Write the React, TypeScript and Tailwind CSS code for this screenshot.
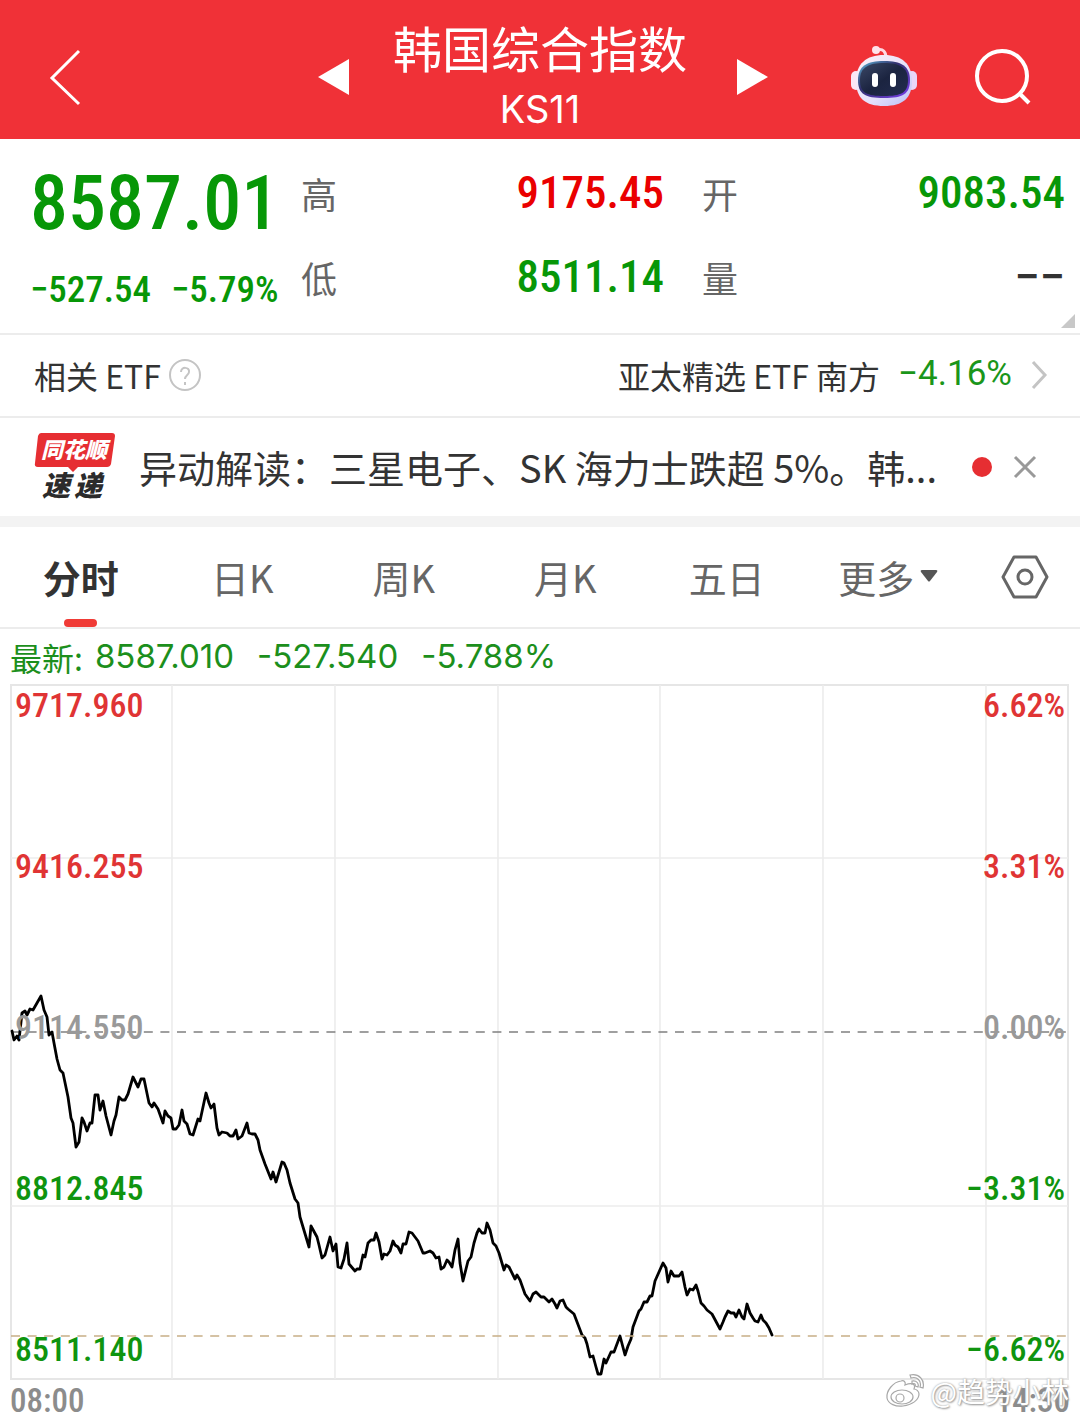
import React from 'react';

const POINTS =
  '12,347 14,356 17,352 19,356 22,329 25,327 27,331 30,325 33,326 41,312 44,326 47,333 49,351 52,348 54,359 57,375 60,386 63,389 68,413 71,434 73,439 76,463 79,458 82,434 84,438 87,447 90,439 92,439 95,411 98,411 100,426 103,417 106,432 111,451 114,437 116,431 119,413 122,416 125,416 128,410 133,393 138,403 141,395 144,395 149,419 152,423 154,419 158,425 163,439 165,427 168,432 171,434 173,445 176,445 179,441 182,426 184,437 187,440 190,450 193,451 198,435 200,437 206,409 209,419 211,424 214,420 217,444 219,451 222,448 227,449 230,452 233,452 236,446 238,455 242,452 247,439 249,449 252,450 255,450 258,456 260,466 265,480 271,495 273,488 276,498 282,478 284,479 287,486 290,499 295,515 298,519 300,533 303,543 309,563 311,542 317,553 319,561 322,574 325,571 330,553 333,567 336,560 338,583 341,584 344,575 347,559 349,580 355,587 357,585 360,585 363,571 365,573 368,559 371,556 374,556 376,549 379,558 382,575 384,570 387,571 390,567 393,557 395,561 398,563 401,569 403,560 406,560 409,548 412,549 418,557 423,569 425,569 430,567 433,569 436,574 439,573 441,585 444,583 447,576 449,578 452,583 455,566 458,555 460,579 463,597 468,577 471,573 474,559 477,549 479,545 482,549 485,549 487,539 490,546 493,559 496,562 499,569 504,586 506,581 509,583 515,595 517,591 520,596 525,610 530,617 533,610 536,608 541,613 544,613 549,618 552,615 555,620 557,624 560,617 563,616 566,623 568,625 574,630 582,651 585,654 587,660 590,673 593,672 596,683 598,690 601,690 604,675 606,679 611,668 614,668 620,652 625,671 628,662 631,655 633,643 639,627 641,625 644,618 647,618 650,612 652,612 655,597 663,579 666,584 668,598 671,587 674,592 679,592 682,588 685,603 687,611 690,605 693,606 696,601 698,607 701,619 704,622 707,626 712,630 720,645 723,638 725,633 728,627 731,629 734,629 736,633 739,626 742,633 744,635 747,620 750,629 753,634 755,637 758,638 761,631 763,636 766,639 769,644 772,651';

const GRID_X = [172, 335, 498, 660, 823, 986];
const GRID_Y = [174, 522];

const AXIS = [
  { price: '9717.960', percent: '6.62%', color: 'text-[#e03434]' },
  { price: '9416.255', percent: '3.31%', color: 'text-[#e03434]' },
  { price: '9114.550', percent: '0.00%', color: 'text-[#999999]' },
  { price: '8812.845', percent: '−3.31%', color: 'text-[#0f940f]' },
  { price: '8511.140', percent: '−6.62%', color: 'text-[#0f940f]' },
];

const STATS = [
  { label: '高', value: '9175.45', color: "font-['Roboto_Condensed','Roboto',sans-serif] text-[#ea0000]" },
  { label: '开', value: '9083.54', color: "font-['Roboto_Condensed','Roboto',sans-serif] text-[#079707]" },
  { label: '低', value: '8511.14', color: "font-['Roboto_Condensed','Roboto',sans-serif] text-[#079707]" },
  { label: '量', value: '−−', color: "font-['Roboto',sans-serif] text-[#333333]" },
];

const TABS = ['分时', '日K', '周K', '月K', '五日'];

const RobotIcon = () => (
  <svg width="68" height="64" viewBox="0 0 68 64" aria-hidden="true">
    <defs>
      <linearGradient id="shell" x1="0" y1="0" x2="1" y2="1">
        <stop offset="0" stopColor="#fff1f6" />
        <stop offset="0.6" stopColor="#e4e0fb" />
        <stop offset="1" stopColor="#b9bdf5" />
      </linearGradient>
      <linearGradient id="rim" x1="0" y1="0" x2="1" y2="1">
        <stop offset="0" stopColor="#5fb8d8" />
        <stop offset="0.4" stopColor="#31306e" />
        <stop offset="1" stopColor="#7b3df0" />
      </linearGradient>
      <linearGradient id="visor" x1="0" y1="0" x2="1" y2="1">
        <stop offset="0" stopColor="#3b4766" />
        <stop offset="0.5" stopColor="#1b2440" />
        <stop offset="1" stopColor="#222c50" />
      </linearGradient>
    </defs>
    <path d="M27 5c6-2 9 2 9 8" fill="none" stroke="#ffd9e2" strokeWidth="3" />
    <circle cx="26" cy="5" r="4" fill="#ffe3ea" />
    <rect x="1" y="26" width="10" height="19" rx="5" fill="#fbe6f4" />
    <rect x="57" y="26" width="10" height="19" rx="5" fill="#e9d6f8" />
    <path d="M34 10c18 0 28 9 28 26 0 17-9 25-28 25S6 53 6 36c0-17 10-26 28-26Z" fill="url(#shell)" />
    <path d="M34 16c17 0 26 5 26 19s-7 18-26 18S8 49 8 35s9-19 26-19Z" fill="url(#rim)" />
    <path d="M34 18c15 0 24 4 24 17s-7 16-24 16-24-3-24-16 9-17 24-17Z" fill="url(#visor)" />
    <rect x="22" y="28" width="6" height="14" rx="3" fill="#fff" />
    <rect x="40" y="28" width="6" height="14" rx="3" fill="#fff" />
  </svg>
);

const BrandLogo = () => (
  <svg width="82" height="72" viewBox="0 0 82 72" role="img" aria-label="同花顺速递" className="shrink-0 overflow-visible">
    <path d="M7 2h71q3 0 3 3l-4 28q-1 3-4 3H44l-5 5-5-5H4q-4 0-3-4L4 5q1-3 3-3Z" fill="#e62e32" />
    <text x="7" y="27" fontSize="22" fontWeight="900" fontStyle="italic" fill="#fff">
      同花顺
    </text>
    <text x="8" y="65" fontSize="28" fontWeight="900" fontStyle="italic" fill="#2b2b2b">
      速
    </text>
    <text x="40" y="65" fontSize="28" fontWeight="900" fontStyle="italic" fill="#2b2b2b">
      递
    </text>
  </svg>
);

const Header = () => (
  <header className="grid grid-cols-[1fr_456px_1fr] items-center bg-[#f03137] h-[139px] pt-[14px] text-white">
    <div className="pl-[48px]">
      <button aria-label="返回" className="block">
        <svg width="34" height="58" viewBox="0 0 34 58" fill="none" stroke="currentColor" strokeWidth="3">
          <path d="M31 3 4 30l27 26" />
        </svg>
      </button>
    </div>
    <div className="flex items-center justify-between">
      <button aria-label="上一个">
        <svg width="38" height="38" viewBox="0 0 38 38" fill="currentColor">
          <path d="M6 19 37 1v36Z" />
        </svg>
      </button>
      <div className="flex flex-col items-center">
        <h1 className="text-[49px] leading-[64px]">韩国综合指数</h1>
        <p className="font-['Inter',sans-serif] text-[38px] leading-[60px]">KS11</p>
      </div>
      <button aria-label="下一个">
        <svg width="38" height="38" viewBox="0 0 38 38" fill="currentColor">
          <path d="M38 19 7 1v36Z" />
        </svg>
      </button>
    </div>
    <div className="flex items-center justify-end gap-[56px] pr-[48px]">
      <button aria-label="智能助手">
        <RobotIcon />
      </button>
      <button aria-label="搜索">
        <svg width="58" height="58" viewBox="0 0 58 58" fill="none" stroke="currentColor" strokeWidth="4">
          <circle cx="28" cy="28" r="25" />
          <path d="m45 45 10 10" />
        </svg>
      </button>
    </div>
  </header>
);

const Quote = () => (
  <section className="relative grid grid-cols-[271px_1fr] pl-[30px] pr-[15px] h-[196px] border-b-2 border-[#ececec]">
    <div className="flex flex-col pt-[24px] font-['Roboto_Condensed','Roboto',sans-serif] font-medium text-[#079707]">
      <span className="text-[76px] leading-[80px]">8587.01</span>
      <div className="flex gap-5 pt-[26px] text-[37px] leading-[42px] whitespace-nowrap">
        <span>−527.54</span>
        <span>−5.79%</span>
      </div>
    </div>
    <dl className="grid grid-cols-2 gap-x-[38px] auto-rows-[84px] pt-[12px]">
      {STATS.map((s) => (
        <div key={s.label} className="flex items-center justify-between">
          <dt className="text-[36px] text-[#666666]">{s.label}</dt>
          <dd className={`font-medium text-[45px] ${s.color}`}>{s.value}</dd>
        </div>
      ))}
    </dl>
    <svg width="14" height="14" viewBox="0 0 14 14" className="absolute right-[5px] bottom-[5px]" aria-hidden="true">
      <path d="M14 0v14H0Z" fill="#c8c8c8" />
    </svg>
  </section>
);

const EtfRow = () => (
  <section className="flex items-center justify-between h-[83px] pl-[34px] pr-[32px] pb-[2px] border-b-2 border-[#ececec] text-[32px] text-[#333333]">
    <div className="flex items-center gap-2">
      <span>相关 ETF</span>
      <button aria-label="说明">
        <svg width="32" height="32" viewBox="0 0 32 32" fill="none" stroke="#c4c4c4" strokeWidth="2">
          <circle cx="16" cy="16" r="15" />
          <path d="M12 13c0-6 9-5 8 0 0 3-4 3-4 7" />
          <path d="M16 23v3" />
        </svg>
      </button>
    </div>
    <a href="#etf" className="flex items-center">
      <span>亚太精选 ETF 南方</span>
      <span className="px-[18px] font-['Roboto',sans-serif] text-[35px] text-[#1a961a]">−4.16%</span>
      <svg width="18" height="30" viewBox="0 0 18 30" fill="none" stroke="#c4c4c4" strokeWidth="3">
        <path d="m3 2 12 13L3 28" />
      </svg>
    </a>
  </section>
);

const NewsRow = () => (
  <section className="flex items-center h-[109px] pl-[34px] pr-[42px] border-b-[11px] border-[#f3f3f3] text-[#333333]">
    <BrandLogo />
    <a href="#news" className="flex-1 min-w-0 pl-[23px] pb-[2px] text-[38px] whitespace-nowrap overflow-hidden">
      异动解读：三星电子、SK 海力士跌超 5%。韩...
    </a>
    <span className="size-[20px] rounded-full bg-[#e62e32]" />
    <button aria-label="关闭" className="pl-[20px]">
      <svg width="26" height="26" viewBox="0 0 26 26" fill="none" stroke="#999999" strokeWidth="3">
        <path d="m3 3 20 20M23 3 3 23" />
      </svg>
    </button>
  </section>
);

const Tabs = () => (
  <nav className="grid grid-cols-[repeat(6,1fr)_111px] h-[102px] border-b-2 border-[#ececec] text-[38px] text-[#666666]">
    {TABS.map((tab, i) => (
      <button key={tab} className="relative flex items-center justify-center pb-[2px]">
        <span className={i === 0 ? 'font-bold text-[#333333]' : ''}>{tab}</span>
        {i === 0 && <span className="absolute bottom-0 h-2 w-[33px] rounded-full bg-[#f03b36]" />}
      </button>
    ))}
    <button className="flex items-center justify-center gap-[6px] pb-[2px]">
      更多
      <svg width="18" height="14" viewBox="0 0 18 14" fill="#555555">
        <path d="M2 1h14q2 0 1 2l-7 9q-1 1-2 0L1 3Q0 1 2 1Z" />
      </svg>
    </button>
    <button aria-label="设置" className="flex items-center justify-center">
      <svg width="48" height="44" viewBox="0 0 48 44" fill="none" stroke="#666666" strokeWidth="3">
        <path d="M13 2h22l11 20-11 20H13L2 22Z" strokeLinejoin="round" />
        <circle cx="24" cy="22" r="7" />
      </svg>
    </button>
  </nav>
);

const Chart = () => (
  <section>
    <div className="flex items-center gap-[23px] h-[55px] pl-[10px] font-['Inter','Noto_Sans_CJK_SC',sans-serif] text-[33px] text-[#1c8f1c]">
      <div className="flex items-center gap-[12px]">
        <span className="font-['Noto_Sans_CJK_SC',sans-serif] text-[32px]">最新:</span>
        <span>8587.010</span>
      </div>
      <span>-527.540</span>
      <span>-5.788%</span>
    </div>
    <div className="relative">
      <svg viewBox="0 0 1080 696" className="block w-full" fill="none" role="img" aria-label="分时走势">
        <rect x="11" y="1" width="1057" height="694" stroke="#e6e6e6" strokeWidth="2" />
        {GRID_X.map((x) => (
          <path key={x} d={`M${x} 1v694`} stroke="#ececec" strokeWidth="1.6" />
        ))}
        {GRID_Y.map((y) => (
          <path key={y} d={`M11 ${y}h1057`} stroke="#ececec" strokeWidth="1.6" />
        ))}
        <path d="M11 348h1057" stroke="#808080" strokeWidth="1.6" strokeDasharray="9 7.6" />
        <polyline points={POINTS} stroke="#000" strokeWidth="2.8" strokeLinejoin="round" strokeLinecap="round" />
        <path d="M11 652h1057" stroke="#c8ae86" strokeWidth="1.6" strokeDasharray="9 7.6" />
      </svg>
      <div className="absolute inset-0 flex flex-col justify-between pt-[3px] pb-[13px] px-[15px] font-['Roboto_Condensed','Roboto',sans-serif] font-medium text-[34px] leading-[36px]">
        {AXIS.map((row) => (
          <div key={row.price} className={`flex justify-between ${row.color}`}>
            <span>{row.price}</span>
            <span>{row.percent}</span>
          </div>
        ))}
      </div>
    </div>
    <div className="relative flex justify-between h-[39px] px-[10px] font-['Roboto_Condensed','Roboto',sans-serif] font-medium text-[33px] leading-[42px] text-[#8c8c8c]">
      <span>08:00</span>
      <span>14:30</span>
      <div className="absolute right-[11px] top-[-10px] flex items-center gap-[4px] text-white font-['Noto_Sans_CJK_SC',sans-serif] text-[28px] font-normal [text-shadow:0_0_2px_#999,1px_1px_2px_#999]">
        <svg width="42" height="36" viewBox="0 0 42 36" fill="#fff" stroke="#a8a8a8" strokeWidth="1.2">
          <path d="M16 8C8 9 1 18 2 25c1 6 9 9 16 8 9-1 16-6 16-12 0-3-3-5-5-5 2-5-2-7-9-4 1-3-1-5-4-4Z" />
          <ellipse cx="17" cy="24" rx="11" ry="7" />
          <circle cx="15" cy="25" r="4" />
          <path d="M25 2c9-2 15 5 13 13l-3-1c2-6-3-11-9-9ZM27 8c5-1 7 3 6 6l-3-1c1-2-1-3-3-2Z" />
        </svg>
        @趋势小林
      </div>
    </div>
  </section>
);

const App: React.FC = () => {
  return (
    <main className="w-full bg-white font-['Noto_Sans_CJK_SC',sans-serif] overflow-hidden" lang="zh-CN">
      <Header />
      <Quote />
      <EtfRow />
      <NewsRow />
      <Tabs />
      <Chart />
    </main>
  );
};

export default App;
